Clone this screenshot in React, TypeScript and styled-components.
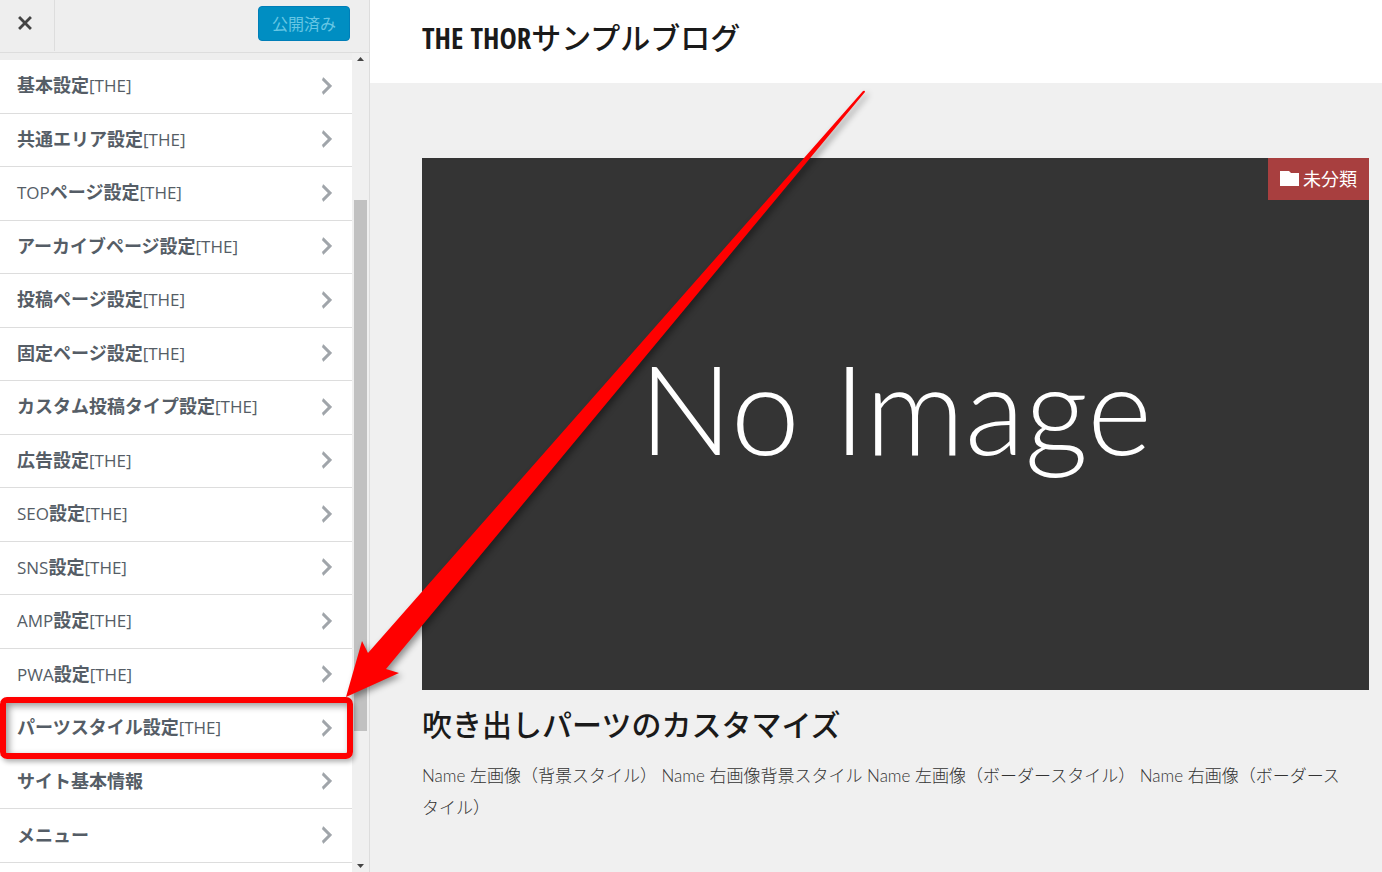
import React from 'react';
import styled, { createGlobalStyle, css } from 'styled-components';

const GlobalStyle = createGlobalStyle`
  * { box-sizing: border-box; }
  html, body, #root { height: 100%; }
  body { margin: 0; background: #f0f0f0; }
`;

const uiFont = '"Open Sans", "Noto Sans CJK JP", sans-serif';
const siteFont = 'Lato, "Noto Sans CJK JP", sans-serif';

const Page = styled.div`
  position: relative;
  display: flex;
  height: 100vh;
  overflow: hidden;
`;

const Sidebar = styled.aside`
  flex: 0 0 370px;
  display: flex;
  flex-direction: column;
  background: #eee;
  border-right: 1px solid #ddd;
  font-family: ${uiFont};
`;

const ActionBar = styled.div`
  flex: none;
  display: flex;
  justify-content: space-between;
  align-items: flex-start;
  height: 53px;
  border-bottom: 1px solid #ddd;
`;

const CloseButton = styled.button`
  display: flex;
  align-items: center;
  justify-content: center;
  width: 55px;
  height: 51px;
  padding: 0 4px 5px 0;
  border: 0;
  border-right: 1px solid #ddd;
  background: none;
  color: #444;
`;

const PublishButton = styled.button`
  width: 92px;
  height: 35px;
  margin: 6px 19px 0 0;
  padding: 0;
  border: 1px solid #007eb8;
  border-radius: 4px;
  background: #008ec2;
  color: #66c6e4;
  font: 400 16px/32px ${uiFont};
`;

const PanelArea = styled.div`
  flex: 1;
  min-height: 0;
  display: flex;
  overflow: hidden;
`;

const PanelList = styled.ul`
  flex: 1;
  margin: 0;
  padding: 0;
  border-top: 7px solid #eee;
  background: #fff;
  list-style: none;
`;

const PanelItem = styled.li<{ $marked?: boolean }>`
  position: relative;
  height: 54px;
  border-bottom: 1px solid #ddd;
  background: #fff;
  &:nth-child(even) { height: 53px; }
  ${p => p.$marked && css`
    z-index: 1;
    &::after {
      content: '';
      position: absolute;
      inset: -5px -1px -4px 0;
      border: 6px solid #f00;
      border-radius: 7px;
      box-shadow: 2px 3px 5px rgba(0, 0, 0, 0.3), inset 3px 3px 7px rgba(0, 0, 0, 0.4);
      pointer-events: none;
    }
  `}
`;

const PanelButton = styled.button`
  display: flex;
  align-items: center;
  justify-content: space-between;
  width: 100%;
  height: 100%;
  padding: 0 13px 2px 17px;
  border: 0;
  background: none;
  color: #555d66;
  font: 700 18px/24px ${uiFont};
  text-align: left;
  white-space: nowrap;
`;

const Latin = styled.span`
  font-size: 17px;
  font-weight: 400;
`;

const Scrollbar = styled.div`
  flex: 0 0 17px;
  display: flex;
  flex-direction: column;
  align-items: center;
  background: #f0f0f0;
`;

const ScrollStep = styled.button`
  flex: none;
  width: 17px;
  height: 12px;
  padding: 0;
  border: 0;
  background: none;
  color: #444;
  display: flex;
  align-items: center;
  justify-content: center;
`;

const Track = styled.div<{ $grow: number; $thumb?: boolean }>`
  flex: ${p => p.$grow} 0 0;
  width: 13px;
  background: ${p => (p.$thumb ? '#c1c1c1' : 'transparent')};
`;

const Preview = styled.div`
  flex: 1;
  min-width: 0;
  background: #f0f0f0;
  color: #1a1a1a;
  font-family: ${siteFont};
`;

const SiteHeader = styled.header`
  height: 83px;
  padding: 14px 52px;
  background: #fff;
`;

const SiteTitle = styled.h1`
  display: flex;
  align-items: baseline;
  margin: 0;
  font: 500 30px/44px "Noto Sans CJK JP", sans-serif;
  white-space: pre;
`;

const SiteTitleLatin = styled.span`
  font-family: "Open Sans Condensed", "Roboto Condensed", "Liberation Sans Narrow", sans-serif;
  font-size: 29px;
  font-weight: 700;
`;

const Post = styled.article`
  padding: 75px 13px 0 52px;
`;

const Thumbnail = styled.div`
  position: relative;
  display: flex;
  align-items: center;
  justify-content: center;
  aspect-ratio: 947 / 532;
  padding-bottom: 34px;
  background: #343434;
  color: #fff;
  font: 300 124px/156px Lato, sans-serif;
`;

const Category = styled.a`
  position: absolute;
  top: 0;
  right: 0;
  display: flex;
  align-items: center;
  gap: 4px;
  height: 42px;
  padding: 0 12px 2px;
  background: #a83f3f;
  color: #fff;
  font: 400 18px/24px "Noto Sans CJK JP", sans-serif;
  text-decoration: none;
`;

const PostTitle = styled.h2`
  margin: 11px 0 15px;
  font: 500 30px/44px "Noto Sans CJK JP", sans-serif;
`;

const Excerpt = styled.p`
  margin: 0;
  padding-right: 20px;
  color: #333;
  font: 300 17px/32px ${siteFont};
`;

const Pointer = styled.svg`
  position: absolute;
  top: 0;
  left: 0;
  z-index: 2;
  overflow: visible;
  pointer-events: none;
  filter: drop-shadow(3px 3px 3px rgba(0, 0, 0, 0.4));
`;

const panels = [
  '基本設定[THE]',
  '共通エリア設定[THE]',
  'TOPページ設定[THE]',
  'アーカイブページ設定[THE]',
  '投稿ページ設定[THE]',
  '固定ページ設定[THE]',
  'カスタム投稿タイプ設定[THE]',
  '広告設定[THE]',
  'SEO設定[THE]',
  'SNS設定[THE]',
  'AMP設定[THE]',
  'PWA設定[THE]',
  'パーツスタイル設定[THE]',
  'サイト基本情報',
  'メニュー',
];

const highlighted = 'パーツスタイル設定[THE]';

const PanelLabel = ({ text }: { text: string }) => (
  <span>
    {text.split(/([A-Z[\]]+)/).map((part, i) => (i % 2 ? <Latin key={i}>{part}</Latin> : part))}
  </span>
);

const Chevron = () => (
  <svg width="24" height="24" viewBox="0 0 20 20" fill="#a0a5aa" stroke="#a0a5aa" strokeWidth="0.5" aria-hidden="true">
    <path d="M6 15l5-5-5-5 1-2 7 7-7 7z" />
  </svg>
);

export default function App() {
  return (
    <>
      <GlobalStyle />
      <Page>
        <Sidebar>
          <ActionBar>
            <CloseButton aria-label="閉じる">
              <svg width="28" height="28" viewBox="0 0 20 20" fill="currentColor">
                <path d="M14.95 6.46L11.41 10l3.54 3.54-1.41 1.41L10 11.42l-3.53 3.53-1.42-1.42L8.58 10 5.05 6.47l1.42-1.42L10 8.58l3.54-3.53z" />
              </svg>
            </CloseButton>
            <PublishButton>公開済み</PublishButton>
          </ActionBar>
          <PanelArea>
            <PanelList>
              {panels.map(name => (
                <PanelItem key={name} $marked={name === highlighted}>
                  <PanelButton>
                    <PanelLabel text={name} />
                    <Chevron />
                  </PanelButton>
                </PanelItem>
              ))}
            </PanelList>
            <Scrollbar>
              <ScrollStep aria-label="上へ">
                <svg width="7" height="4" viewBox="0 0 7 4" fill="currentColor"><path d="M0 4L3.5 0L7 4z" /></svg>
              </ScrollStep>
              <Track $grow={135} />
              <Track $grow={531} $thumb />
              <Track $grow={129} />
              <ScrollStep aria-label="下へ">
                <svg width="7" height="4" viewBox="0 0 7 4" fill="currentColor"><path d="M0 0L3.5 4L7 0z" /></svg>
              </ScrollStep>
            </Scrollbar>
          </PanelArea>
        </Sidebar>
        <Preview>
          <SiteHeader>
            <SiteTitle><SiteTitleLatin>THE THOR</SiteTitleLatin>サンプルブログ</SiteTitle>
          </SiteHeader>
          <Post>
            <Thumbnail>
              No Image
              <Category href="#">
                <svg width="19" height="15" viewBox="0 0 19 15" fill="currentColor" aria-hidden="true">
                  <path d="M0 0h9l2 2h8v13H0z" />
                </svg>
                未分類
              </Category>
            </Thumbnail>
            <PostTitle>吹き出しパーツのカスタマイズ</PostTitle>
            <Excerpt>
              Name 左画像（背景スタイル） Name 右画像背景スタイル Name 左画像（ボーダースタイル） Name 右画像（ボーダースタイル）
            </Excerpt>
          </Post>
        </Preview>
        <Pointer width="900" height="720" viewBox="0 0 900 720" aria-hidden="true">
          <path fill="#f00" d="M346 697L362 641L368 653L863 91Q865 90 865 92L386 669L399 673z" />
        </Pointer>
      </Page>
    </>
  );
}
